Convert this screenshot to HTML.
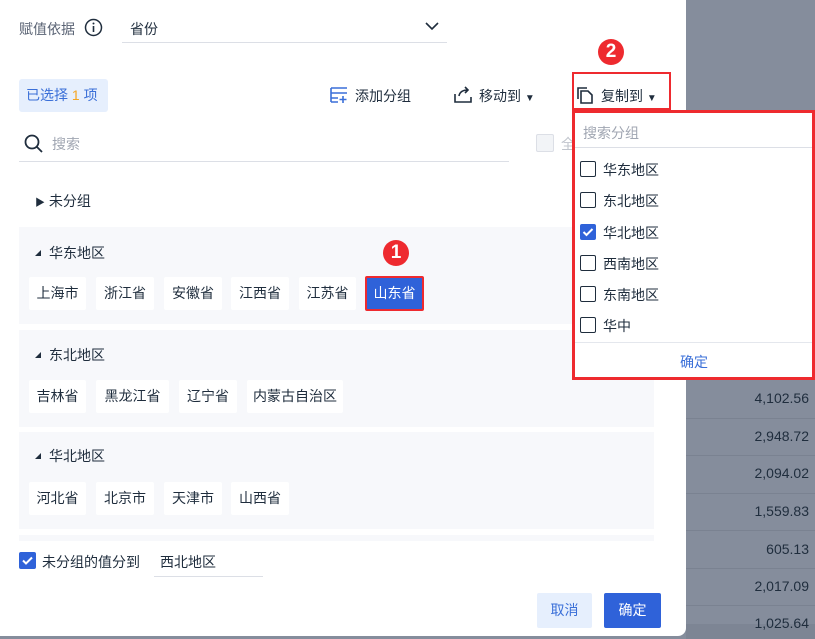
<!DOCTYPE html><html><head><meta charset="utf-8"><style>
*{margin:0;padding:0;box-sizing:border-box}
body{width:815px;height:639px;overflow:hidden;background:#858d9c;font-family:"Liberation Sans","Noto Sans CJK SC",sans-serif;font-size:14px;color:#1f2d3d;position:relative}
.a{position:absolute}
.dlg{left:0;top:0;width:686px;height:636px;background:#fff;border-radius:0 0 8px 0}
.panel{left:19px;width:635px;background:#f7f8fb}
.tag{position:absolute;height:33px;line-height:33px;background:#fff;border-radius:2px;text-align:center;font-size:14px}
.gt{position:absolute;left:16px;font-size:14px}
.gt:before{content:"";display:inline-block;border-left:6px solid transparent;border-bottom:6px solid #1f2d3d;margin-right:8px;vertical-align:2px}
.num{right:6px;color:#1f2d3d;font-size:14px}
.ln{left:686px;width:129px;height:1px;background:#7a8291}
.cb{position:absolute;width:16px;height:16px;border:1px solid #1f2d3d;border-radius:2px;left:5px}
.it{position:absolute;left:28px;font-size:14px}
.badge{width:26px;height:26px;border-radius:50%;background:#ee2a2f;color:#fff;font-weight:bold;font-size:19px;text-align:center;line-height:26px}
</style></head><body>
<div class="a dlg"></div>
<div class="a ln" style="top:418px"></div><div class="a ln" style="top:455px"></div><div class="a ln" style="top:493px"></div><div class="a ln" style="top:530px"></div><div class="a ln" style="top:568px"></div><div class="a ln" style="top:605px"></div>
<div class="a" style="left:686px;top:624px;width:129px;height:15px;background:#7d8594"></div>
<div class="a num" style="top:390px">4,102.56</div>
<div class="a num" style="top:428px">2,948.72</div>
<div class="a num" style="top:465px">2,094.02</div>
<div class="a num" style="top:503px">1,559.83</div>
<div class="a num" style="top:541px">605.13</div>
<div class="a num" style="top:578px">2,017.09</div>
<div class="a num" style="top:615px">1,025.64</div>
<div class="a" style="left:19px;top:19px;color:#5a6374;font-size:14px">赋值依据</div>
<svg class="a" style="left:84px;top:18px" width="19" height="19" viewBox="0 0 19 19"><circle cx="9.5" cy="9.5" r="8" fill="none" stroke="#1f2d3d" stroke-width="1.5"/><rect x="8.7" y="8" width="1.6" height="6" fill="#1f2d3d"/><circle cx="9.5" cy="5.5" r="1" fill="#1f2d3d"/></svg>
<div class="a" style="left:130px;top:19px">省份</div>
<svg class="a" style="left:424px;top:20px" width="16" height="12"><path d="M2 3l6 6 6-6" fill="none" stroke="#1f2d3d" stroke-width="1.6"/></svg>
<div class="a" style="left:122px;top:42px;width:325px;height:1px;background:#dcdfe6"></div>
<div class="a" style="left:19px;top:79px;width:89px;height:33px;background:#e6effd;border-radius:3px;color:#3a6fd8;line-height:33px;padding-left:7px">已选择 <span style="color:#f5a623">1</span> 项</div>
<svg class="a" style="left:330px;top:86px" width="18" height="18"><path d="M1 2h16M1 7h16M1 2v14M1 12h7M1 16h7M13 10v7M9.5 13.5h7" fill="none" stroke="#3a6fd8" stroke-width="1.6"/></svg>
<div class="a" style="left:355px;top:86px">添加分组</div>
<svg class="a" style="left:454px;top:86px" width="18" height="18"><path d="M1 8v8h16v-5M5 10q1-6 9-6M11 1l3 3-3 3" fill="none" stroke="#1f2d3d" stroke-width="1.6"/></svg>
<div class="a" style="left:479px;top:86px">移动到 <span style="font-size:10px">▼</span></div>
<div class="a badge" style="left:598px;top:39px">2</div>
<div class="a" style="left:572px;top:72px;width:99px;height:38px;border:2px solid #ee2a2f"></div>
<svg class="a" style="left:576px;top:86px" width="18" height="18"><path d="M2 13V2h9M5 5h7l4 4v8H5z" fill="none" stroke="#1f2d3d" stroke-width="1.6"/></svg>
<div class="a" style="left:601px;top:86px">复制到 <span style="font-size:10px">▼</span></div>
<svg class="a" style="left:24px;top:134px" width="20" height="20"><circle cx="8" cy="8" r="6.5" fill="none" stroke="#1f2d3d" stroke-width="1.8"/><path d="M13 13l5 5" stroke="#1f2d3d" stroke-width="1.8"/></svg>
<div class="a" style="left:52px;top:134px;color:#a0a6b2">搜索</div>
<div class="a" style="left:19px;top:161px;width:490px;height:1px;background:#dcdfe6"></div>
<div class="a" style="left:536px;top:134px;width:18px;height:18px;border:1px solid #dcdfe6;background:#f2f4f7;border-radius:2px"></div>
<div class="a" style="left:561px;top:134px;color:#c0c4cc">全</div>
<div class="a" style="left:35px;top:191px"><span style="font-size:10px">▶</span> 未分组</div>
<div class="a panel" style="top:227px;height:97px">
<div class="gt" style="top:16px">华东地区</div>
<div class="tag" style="left:10px;top:50px;width:57px">上海市</div>
<div class="tag" style="left:77px;top:50px;width:58px">浙江省</div>
<div class="tag" style="left:145px;top:50px;width:58px">安徽省</div>
<div class="tag" style="left:212px;top:50px;width:58px">江西省</div>
<div class="tag" style="left:280px;top:50px;width:57px">江苏省</div>
<div class="tag" style="left:346px;top:49px;width:59px;height:35px;line-height:31px;background:#2f62d9;color:#fff;border:2px solid #ee2a2f">山东省</div>
</div>
<div class="a badge" style="left:383px;top:240px">1</div>
<div class="a panel" style="top:330px;height:97px">
<div class="gt" style="top:15px">东北地区</div>
<div class="tag" style="left:10px;top:50px;width:57px">吉林省</div>
<div class="tag" style="left:77px;top:50px;width:73px">黑龙江省</div>
<div class="tag" style="left:160px;top:50px;width:58px">辽宁省</div>
<div class="tag" style="left:228px;top:50px;width:96px">内蒙古自治区</div>
</div>
<div class="a panel" style="top:432px;height:97px">
<div class="gt" style="top:14px">华北地区</div>
<div class="tag" style="left:10px;top:50px;width:57px">河北省</div>
<div class="tag" style="left:77px;top:50px;width:58px">北京市</div>
<div class="tag" style="left:145px;top:50px;width:58px">天津市</div>
<div class="tag" style="left:212px;top:50px;width:58px">山西省</div>
</div>
<div class="a panel" style="top:535px;height:6px"></div>
<div class="a" style="left:19px;top:552px;width:17px;height:17px;background:#2f62d9;border-radius:2px"></div>
<svg class="a" style="left:19px;top:552px" width="17" height="17"><path d="M4 8.5l3 3 6-6" fill="none" stroke="#fff" stroke-width="2"/></svg>
<div class="a" style="left:42px;top:552px">未分组的值分到</div>
<div class="a" style="left:160px;top:552px">西北地区</div>
<div class="a" style="left:154px;top:576px;width:109px;height:1px;background:#dcdfe6"></div>
<div class="a" style="left:537px;top:593px;width:55px;height:35px;background:#e6effd;color:#3a6fd8;border-radius:2px;text-align:center;line-height:35px">取消</div>
<div class="a" style="left:604px;top:593px;width:57px;height:35px;background:#2f62d9;color:#fff;border-radius:2px;text-align:center;line-height:35px">确定</div>
<div class="a" style="left:572px;top:110px;width:243px;height:270px;background:#fff;border:3px solid #ee2a2f">
<div class="a" style="left:8px;top:10px;color:#a0a6b2">搜索分组</div>
<div class="a" style="left:0;top:34px;width:237px;height:1px;background:#dcdfe6"></div>
<div class="cb" style="top:48px"></div><div class="it" style="top:47px">华东地区</div>
<div class="cb" style="top:79px"></div><div class="it" style="top:78px">东北地区</div>
<div class="cb" style="top:111px;background:#2f62d9;border-color:#2f62d9"></div>
<svg class="a" style="left:5px;top:111px" width="16" height="16"><path d="M3.5 8l3 3 6-6" fill="none" stroke="#fff" stroke-width="2"/></svg>
<div class="it" style="top:110px">华北地区</div>
<div class="cb" style="top:142px"></div><div class="it" style="top:141px">西南地区</div>
<div class="cb" style="top:173px"></div><div class="it" style="top:172px">东南地区</div>
<div class="cb" style="top:204px"></div><div class="it" style="top:203px">华中</div>
<div class="a" style="left:0;top:229px;width:237px;height:1px;background:#e4e7ed"></div>
<div class="a" style="left:105px;top:239px;color:#3a6fd8">确定</div>
</div>
</body></html>
